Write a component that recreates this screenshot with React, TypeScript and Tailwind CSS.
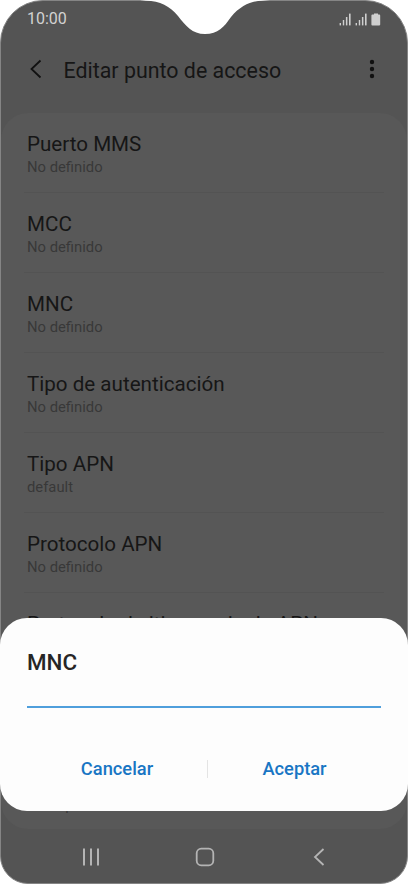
import React from 'react';

interface Setting {
  id: string;
  title?: string;
  value?: string;
}

const settings: Setting[] = [
  { id: 'mms-port', title: 'Puerto MMS', value: 'No definido' },
  { id: 'mcc', title: 'MCC', value: 'No definido' },
  { id: 'mnc', title: 'MNC', value: 'No definido' },
  { id: 'auth', title: 'Tipo de autenticación', value: 'No definido' },
  { id: 'apn-type', title: 'Tipo APN', value: 'default' },
  { id: 'protocol', title: 'Protocolo APN', value: 'No definido' },
  { id: 'roaming', title: 'Protocolo de itinerancia de APN' },
  { id: 'enabled' },
  { id: 'bearer', value: 'No especificado' },
];

const SignalIcon = () => (
  <svg width="13" height="13" viewBox="0 0 13 13" fill="#cfcfcf">
    <rect x="0.6" y="10" width="1.4" height="2.4" />
    <rect x="3.8" y="7" width="1.4" height="5.4" />
    <rect x="6.9" y="4" width="1.5" height="8.4" />
    <rect x="10" y="0.6" width="1.6" height="11.8" />
  </svg>
);

const StatusBar = () => (
  <div className="h-[38px] pl-[26px] pr-[26px] flex items-center justify-between">
    <span className="text-[16px] leading-[20px] text-[#d2d2d2]">10:00</span>
    <div className="flex items-center gap-[3px]">
      <SignalIcon />
      <SignalIcon />
      <svg width="10" height="13" viewBox="0 0 10 13" fill="#cfcfcf">
        <path d="M3 0.5h4v1h1.3c.5 0 .9.4.9.9v9.2c0 .5-.4.9-.9.9H1.3c-.5 0-.9-.4-.9-.9V2.4c0-.5.4-.9.9-.9H3z" />
      </svg>
    </div>
  </div>
);

const Header = () => (
  <header className="h-[75px] pl-[28px] pr-[31px] pb-[13px] flex items-center">
    <svg width="14" height="20" viewBox="0 0 14 20" fill="none" stroke="#111" strokeWidth="1.8">
      <path d="M11.5 1.5L2.500 10l9 8.500" />
    </svg>
    <h1 className="ml-[20.5px] mt-[3px] text-[21.4px] leading-[28px] text-[#161616] whitespace-nowrap">
      Editar punto de acceso
    </h1>
    <svg className="ml-auto" width="8" height="20" viewBox="0 0 8 20" fill="#111">
      <circle cx="4" cy="3" r="2.2" />
      <circle cx="4" cy="10" r="2.2" />
      <circle cx="4" cy="17" r="2.2" />
    </svg>
  </header>
);

const SettingRow: React.FC<Setting> = ({ title, value }) => (
  <div className="h-20 mx-[23px] px-[3px] pt-[18px] border-b border-[#535353] last:border-b-0 last:-mt-[2px]">
    <div className="h-[26px] text-[20.6px] leading-[26px] text-[#161616] whitespace-nowrap">{title}</div>
    <div className="text-[14.8px] leading-[20px] text-[#383838]">{value}</div>
  </div>
);

const NavBar = () => (
  <nav className="h-[55px] flex items-center pl-[80px]">
    <svg width="20" height="20" viewBox="0 0 20 20" stroke="#b4b4b4" strokeWidth="2">
      <path d="M3 1.500v17M10 1.500v17M17 1.500v17" />
    </svg>
    <svg className="ml-[94px]" width="20" height="20" viewBox="0 0 20 20" fill="none" stroke="#b4b4b4" strokeWidth="1.8">
      <rect x="1.7" y="1.7" width="16.6" height="16.6" rx="4.5" />
    </svg>
    <svg className="ml-[97px]" width="14" height="20" viewBox="0 0 14 20" fill="none" stroke="#b4b4b4" strokeWidth="1.8">
      <path d="M11.500 2L3 10l8.500 8" />
    </svg>
  </nav>
);

const MncDialog = () => (
  <div className="absolute left-0 top-[618px] w-[408px] h-[193px] rounded-[27px] bg-[#fdfdfd] px-[27px] pt-[30px]">
    <h2 className="text-[22.4px] leading-[28px] font-medium text-[#262626]">MNC</h2>
    <div className="mt-[30px] h-[2px] bg-[#4f9fdc]" />
    <div className="mt-[43px] h-[36px] flex items-center text-[18.3px] font-medium text-[#1976c4]">
      <button className="w-[180px]">Cancelar</button>
      <div className="w-px h-[18px] mb-[1px] bg-[#e4e4e4]" />
      <button className="w-[173px]">Aceptar</button>
    </div>
  </div>
);

const App: React.FC = () => {
  return (
    <div className="relative w-[408px] h-[884px] overflow-hidden bg-white font-[Roboto,sans-serif]">
      <div className="h-[884px] overflow-hidden rounded-t-[43px] rounded-b-[28px] bg-[#545454] border border-[#858585]">
        <div className="-mt-px">
          <StatusBar />
          <Header />
          <main className="h-[716px] overflow-hidden rounded-[27px] bg-[#585858]">
            {settings.map((item) => (
              <SettingRow key={item.id} {...item} />
            ))}
          </main>
          <NavBar />
        </div>
      </div>

      {/* Camera notch */}
      <svg className="absolute left-[140px] top-0" width="130" height="36" viewBox="0 0 130 36">
        <path
          d="M0 0L6 .7C20 1 30 6 38 16C46 26 52 34 65 34C78 34 84 27 91 17C101 5 112 1 122 .7L130 0Z"
          fill="#fff"
        />
      </svg>

      <MncDialog />
    </div>
  );
};

export default App;
